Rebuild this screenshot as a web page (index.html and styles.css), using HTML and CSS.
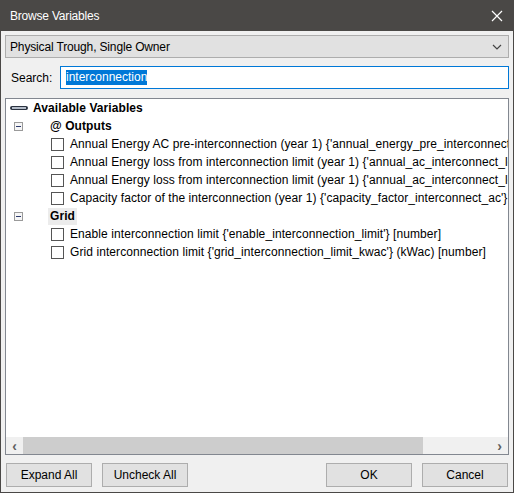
FILE: index.html
```html
<!DOCTYPE html>
<html lang="en">
<head>
    <meta charset="UTF-8">
    <title>Browse Variables</title>
    <link rel="stylesheet" href="styles.css">
</head>
<body>
    <div class="window">
        <div class="titlebar">
            <span class="title">Browse Variables</span>
            <svg class="close" width="12" height="12" viewBox="0 0 12 12">
                <path d="M1 1 L11 11 M11 1 L1 11" stroke="#fff" stroke-width="1.2"/>
            </svg>
        </div>

        <div class="body">
            <div class="select">
                <span>Physical Trough, Single Owner</span>
                <svg width="10" height="6" viewBox="0 0 10 6">
                    <path d="M1 1 L5 5 L9 1" stroke="#444" fill="none" stroke-width="1.2"/>
                </svg>
            </div>

            <div class="search-row">
                <label>Search:</label>
                <div class="search-box"><span class="sel">interconnection</span></div>
            </div>

            <div class="tree">
                <div class="tree-items">
                    <div class="row root">
                        <span class="pill"></span>
                        <b>Available Variables</b>
                    </div>

                    <div class="row group">
                        <span class="toggle"></span>
                        <b>@ Outputs</b>
                    </div>
                    <div class="row item"><span class="check"></span>Annual Energy AC pre-interconnection (year 1) {'annual_energy_pre_interconnect_ac'} (kWh) [number]</div>
                    <div class="row item"><span class="check"></span>Annual Energy loss from interconnection limit (year 1) {'annual_ac_interconnect_loss_kwh'} (kWh) [number]</div>
                    <div class="row item"><span class="check"></span>Annual Energy loss from interconnection limit (year 1) {'annual_ac_interconnect_loss_percent'} (%) [number]</div>
                    <div class="row item"><span class="check"></span>Capacity factor of the interconnection (year 1) {'capacity_factor_interconnect_ac'} (%) [number]</div>

                    <div class="row group">
                        <span class="toggle"></span>
                        <b class="current">Grid</b>
                    </div>
                    <div class="row item"><span class="check"></span>Enable interconnection limit {'enable_interconnection_limit'} [number]</div>
                    <div class="row item"><span class="check"></span>Grid interconnection limit {'grid_interconnection_limit_kwac'} (kWac) [number]</div>
                </div>

                <div class="hscroll">
                    <span class="arrow">&#8249;</span>
                    <div class="track"><div class="thumb"></div></div>
                    <span class="arrow">&#8250;</span>
                </div>
            </div>

            <div class="buttons">
                <button>Expand All</button>
                <button>Uncheck All</button>
                <span class="spacer"></span>
                <button>OK</button>
                <button>Cancel</button>
            </div>
        </div>
    </div>
</body>
</html>
```

FILE: styles.css
```css
body {
    margin: 0;
    font-family: "Liberation Sans", Arial, sans-serif;
    font-size: 12px;
    color: #000;
}
.window {
    width: 512px;
    height: 492px;
    border: 1px solid #4a4846;
    border-top: none;
    background-color: #f0f0f0;
    display: flex;
    flex-direction: column;
}
.titlebar {
    height: 31px;
    background-color: #4a4846;
    color: white;
    display: flex;
    align-items: center;
    justify-content: space-between;
    padding: 0 10px 0 9px;
    font-size: 12px;
}
.title {
    letter-spacing: -0.2px;
}
.body {
    flex: 1;
    display: flex;
    flex-direction: column;
    padding: 4px 4px 5px 4px;
}
.select {
    height: 21px;
    border: 1px solid #adadad;
    background-color: #e1e1e1;
    display: flex;
    align-items: center;
    justify-content: space-between;
    padding: 0 6px 0 4px;
    letter-spacing: -0.15px;
}
.search-row {
    display: flex;
    align-items: center;
    margin-top: 8px;
    height: 23px;
}
.search-row label {
    width: 49px;
    padding-left: 6px;
}
.search-box {
    flex: 1;
    height: 21px;
    border: 1px solid #0078d7;
    background-color: white;
    display: flex;
    align-items: center;
    padding-left: 5px;
}
.sel {
    background-color: #0078d7;
    color: white;
    line-height: 15px;
}
.tree {
    margin-top: 9px;
    height: 355px;
    border: 1px solid #828790;
    background-color: white;
    display: flex;
    flex-direction: column;
    overflow: hidden;
}
.tree-items {
    flex: 1;
    overflow: hidden;
    letter-spacing: 0.08px;
}
.row {
    height: 18px;
    display: flex;
    align-items: center;
    white-space: nowrap;
}
.root {
    padding-left: 4px;
}
.pill {
    width: 14px;
    height: 2px;
    border: 1px solid #2b3340;
    border-width: 1px 2px;
    border-radius: 3px;
    background-color: #b4bcc8;
    margin-right: 5px;
}
.group {
    padding-left: 8px;
}
.toggle {
    width: 7px;
    height: 7px;
    border: 1px solid #9a9a9a;
    background-color: #f6f6f6;
    position: relative;
    margin-right: 27px;
}
.toggle::after {
    content: "";
    position: absolute;
    left: 1px;
    top: 3px;
    width: 5px;
    height: 1px;
    background-color: #2e3b6e;
}
.current {
    background-color: #ececec;
    padding: 1px 2px 2px;
    margin-left: -2px;
}
.item {
    padding-left: 45px;
}
.check {
    width: 11px;
    height: 11px;
    border: 1px solid #555;
    background-color: white;
    margin-right: 6px;
    flex-shrink: 0;
}
.hscroll {
    height: 17px;
    background-color: #f0f0f0;
    display: flex;
    align-items: center;
}
.arrow {
    width: 17px;
    text-align: center;
    color: #606060;
    font-weight: bold;
    font-size: 14px;
}
.track {
    flex: 1;
    height: 100%;
}
.thumb {
    width: 400px;
    height: 100%;
    background-color: #cdcdcd;
}
.buttons {
    display: flex;
    margin-top: 8px;
    padding: 0 1px;
    gap: 10px;
}
.spacer {
    flex: 1;
}
button {
    width: 86px;
    height: 24px;
    border: 1px solid #adadad;
    background-color: #e1e1e1;
    font-family: inherit;
    font-size: 12px;
    padding: 0;
}
```
